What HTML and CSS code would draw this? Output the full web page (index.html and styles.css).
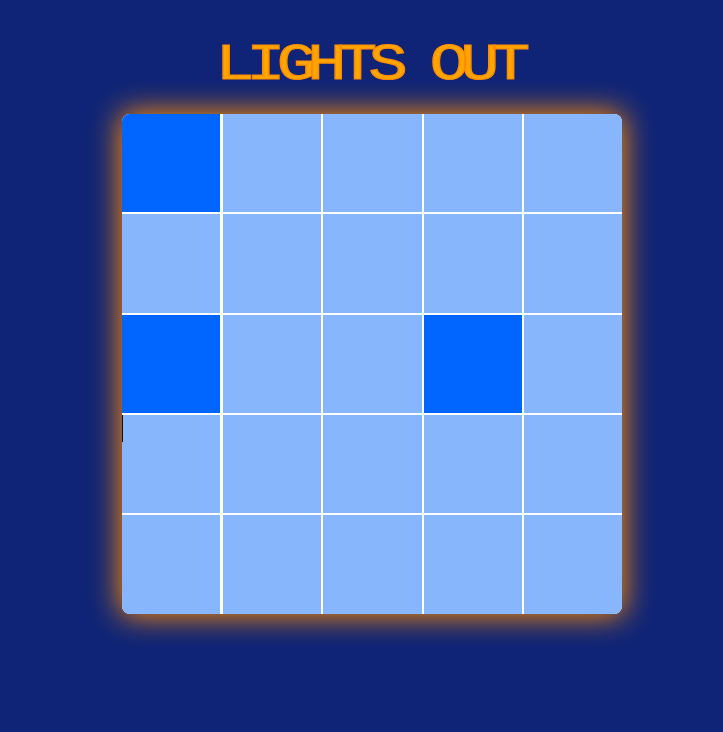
FILE: index.html
```html
<!DOCTYPE html>
<html lang="en">
<head>
<meta charset="utf-8">
<title>Lights Out</title>
<link rel="stylesheet" href="styles.css">
</head>
<body>
<main class="game">
  <h1 class="title">LIGHTS OUT</h1>
  <div class="board">
    <div class="cell on"></div><div class="cell"></div><div class="cell"></div><div class="cell"></div><div class="cell"></div>
    <div class="cell"></div><div class="cell"></div><div class="cell"></div><div class="cell"></div><div class="cell"></div>
    <div class="cell on"></div><div class="cell"></div><div class="cell"></div><div class="cell on"></div><div class="cell"></div>
    <div class="cell caret"></div><div class="cell"></div><div class="cell"></div><div class="cell"></div><div class="cell"></div>
    <div class="cell"></div><div class="cell"></div><div class="cell"></div><div class="cell"></div><div class="cell"></div>
  </div>
</main>
</body>
</html>
```
FILE: styles.css
```css
html, body {
  margin: 0;
  height: 100%;
}
body {
  background: #0f2476;
  overflow: hidden;
}
.game {
  display: flex;
  flex-direction: column;
  align-items: center;
  padding: 0 0 0 21px;
}
.title {
  margin: 0 7px 0 0;
  height: 114px;
  box-sizing: border-box;
  padding-top: 36px;
  font-family: "Liberation Mono", monospace;
  font-size: 51px;
  line-height: 60px;
  font-weight: 400;
  letter-spacing: -6.7px;
  white-space: pre;
  color: #ffa500;
  -webkit-text-stroke: 1.2px #ff8c00;
  transform: scaleX(1.28);
}
.board {
  display: grid;
  grid-template-columns: 101px 100px 101px 100px 98px;
  grid-template-rows: 100px 101px 100px 100px 99px;
  width: 500px;
  height: 500px;
  background: #fff;
  border-radius: 8px;
  overflow: hidden;
  box-shadow: 0 0 30px 2px #ff8c00;
}
.cell {
  position: relative;
  background: #87b6fd;
  margin: 0 2px 2px 0;
}
.cell:nth-child(5n + 1) {
  margin-right: 3px;
}
.cell:nth-child(5n) {
  margin-right: 0;
}
.cell:nth-last-child(-n + 5) {
  margin-bottom: 0;
}
.on {
  background: #0066ff;
}
.caret::before {
  content: "";
  position: absolute;
  left: 0;
  top: 0;
  width: 1px;
  height: 27px;
  background: #1a0f00;
}
```
